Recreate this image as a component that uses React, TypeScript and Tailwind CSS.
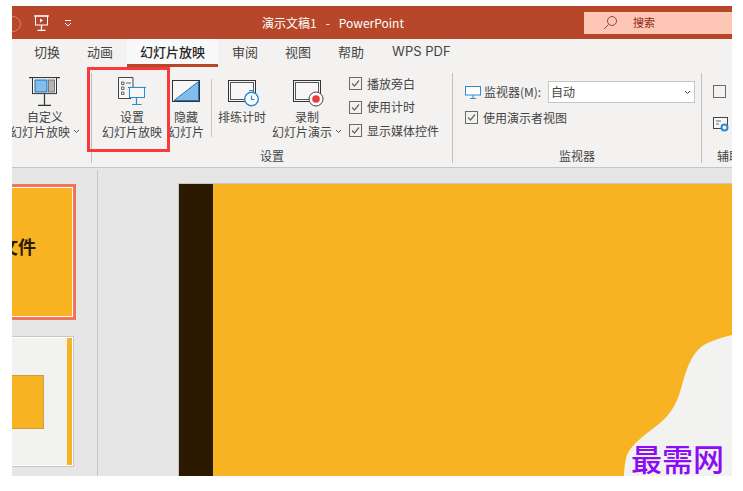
const cjk = "font-['Noto_Sans_CJK_SC','Liberation_Sans',sans-serif]";

function CheckBox({ checked = true }: { checked?: boolean }) {
  return (
    <span className="flex h-[13px] w-[13px] shrink-0 items-center justify-center border border-[#6a6a6a] bg-[#f3f2f1]">
      {checked && (
        <svg width="11" height="11" viewBox="0 0 11 11" fill="none">
          <path d="M2 5.5 L4.5 8 L9 2.5" stroke="#666" strokeWidth="1.2" />
        </svg>
      )}
    </span>
  );
}

function CheckRow({ label, checked }: { label: string; checked?: boolean }) {
  return (
    <div className="flex h-[23.5px] items-center gap-[5px] whitespace-nowrap text-[12px] text-[#444]">
      <CheckBox checked={checked} />
      <span>{label}</span>
    </div>
  );
}

function RibbonButton({
  width,
  iconHeight,
  icon,
  lines,
  chevron,
}: {
  width: string;
  iconHeight: string;
  icon: React.ReactNode;
  lines: string[];
  chevron?: boolean;
}) {
  return (
    <div className={`flex shrink-0 flex-col items-center ${width}`}>
      <div className={`flex items-end justify-center ${iconHeight}`}>{icon}</div>
      <div className="flex flex-col items-center whitespace-nowrap text-[12px] leading-[15px] text-[#444]">
        {lines.map((l, i) => (
          <span key={l} className="flex items-center gap-[3px]">
            {l}
            {chevron && i === lines.length - 1 && <Chevron />}
          </span>
        ))}
      </div>
    </div>
  );
}

function Chevron({ color = "#555" }: { color?: string }) {
  return (
    <svg width="7" height="5" viewBox="0 0 7 5" fill="none">
      <path d="M1 1 L3.5 3.5 L6 1" stroke={color} strokeWidth="1" />
    </svg>
  );
}

function CustomIcon() {
  return (
    <svg width="32" height="29" viewBox="0 0 32 29" fill="none">
      <path d="M0 0.6 H31" stroke="#333" strokeWidth="1.2" />
      <rect x="3.5" y="0.6" width="24" height="16" fill="#f8f8f8" stroke="#333" />
      <rect x="6" y="3" width="12" height="12" fill="#83bdec" stroke="#1f6fb5" />
      <rect x="19.5" y="3" width="6" height="12" fill="#b4b4b4" stroke="#777" />
      <path d="M15.5 17 V28 M9 28.4 H22" stroke="#333" strokeWidth="1.2" />
    </svg>
  );
}

function SetupIcon() {
  return (
    <svg width="29" height="28" viewBox="0 0 29 28" fill="none">
      <path d="M0.5 0.5 H15 V10 M13 21.5 H0.5 V0.5" stroke="#444" fill="#f7f7f7" />
      <path d="M3.5 5 h2.5 v2.5 h-2.5z M3.5 10 h2.5 v2.5 h-2.5z M3.5 15 h2.5 v2.5 h-2.5z M8 6 h5" stroke="#555" strokeWidth="0.9" />
      <path d="M10 10.5 H28" stroke="#2a8dd0" strokeWidth="1.2" />
      <rect x="11.5" y="10.5" width="15" height="10" fill="#f7f7f7" stroke="#2a8dd0" />
      <path d="M18.5 20.5 V27 M14 27.5 H23.5" stroke="#2a8dd0" strokeWidth="1.2" />
    </svg>
  );
}

function HideIcon() {
  return (
    <svg width="28" height="22" viewBox="0 0 28 22" fill="none">
      <rect x="0.5" y="0.5" width="27" height="21" fill="#f7f7f7" stroke="#333" />
      <path d="M3 20 L26 2 V20 Z" fill="#83bdec" />
      <path d="M2 20.5 L26.5 1.5 M26.5 1.5 V20.5 H2" stroke="#1f6fb5" />
    </svg>
  );
}

function RehearseIcon() {
  return (
    <svg className="ml-[4px]" width="32" height="27" viewBox="0 0 32 27" fill="none">
      <rect x="0.5" y="0.5" width="27" height="21" fill="#f7f7f7" stroke="#333" />
      <rect x="2.5" y="2.5" width="23" height="17" fill="none" stroke="#555" />
      <circle cx="23.5" cy="19" r="6.8" fill="#fff" stroke="#2a8dd0" strokeWidth="1.4" />
      <path d="M21 10.5 H26 M23.5 15.5 V19.5 H26.5" stroke="#2a8dd0" strokeWidth="1.2" />
    </svg>
  );
}

function RecordIcon() {
  return (
    <svg className="ml-[2px]" width="31" height="27" viewBox="0 0 31 27" fill="none">
      <rect x="0.5" y="0.5" width="27" height="21" fill="#f7f7f7" stroke="#333" />
      <rect x="2.5" y="2.5" width="23" height="17" fill="none" stroke="#555" />
      <circle cx="23" cy="19" r="7" fill="#fff" stroke="#444" />
      <circle cx="23" cy="19" r="3.8" fill="#ee3a3a" />
    </svg>
  );
}

function Separator() {
  return <div className="mt-[6px] h-[58px] w-px shrink-0 bg-[#c8c8c8]" />;
}

export default function App() {
  return (
    <div className={`h-[491px] w-[743px] overflow-hidden bg-white pb-[15px] pl-[12px] pr-[11px] pt-[6px] ${cjk}`}>
      <div className="relative flex h-full flex-col overflow-hidden">
        {/* Title bar */}
        <div className="relative flex h-[33px] shrink-0 items-center bg-[#b7472a]">
          <span className="absolute -left-[7px] top-[10px] h-[16px] w-[16px] rounded-full border border-[#d8826c]" />
          <svg className="ml-[22px]" width="15" height="16" viewBox="0 0 15 16" fill="none">
            <path d="M0 1 H15" stroke="#fff" strokeWidth="1.2" />
            <rect x="1.5" y="1" width="12" height="9" stroke="#fff" fill="none" />
            <path d="M6 3.5 L9 5.5 L6 7.5 Z" fill="#fff" />
            <path d="M7.5 10 V15 M3.5 15.3 H11.5" stroke="#fff" strokeWidth="1.2" />
          </svg>
          <svg className="ml-[15px]" width="8" height="8" viewBox="0 0 8 8" fill="none">
            <path d="M1 1.5 H7" stroke="#fff" />
            <path d="M1 4 L4 7 L7 4" stroke="#fff" />
          </svg>
          <span className="ml-[190px] whitespace-nowrap text-[12px] text-white">
            演示文稿1<span className="mx-[9px]">-</span>PowerPoint
          </span>
          <div className="ml-auto flex h-[22px] w-[148px] items-center bg-[#fec6b4] pl-[19px] text-[11px] text-[#8c2a12]">
            <svg width="15" height="15" viewBox="0 0 15 15" fill="none">
              <circle cx="9" cy="6" r="4.5" stroke="#8c4a38" />
              <path d="M5.5 9.5 L1 14" stroke="#8c4a38" />
            </svg>
            <span className="ml-[15px]">搜索</span>
          </div>
        </div>

        {/* Tabs */}
        <div className="flex h-[28px] shrink-0 gap-px bg-[#f3f2f1] pb-[2px] pl-[9px] text-[13px] text-[#444]">
          {["切换", "动画"].map((t) => (
            <span key={t} className="flex items-center px-[13px]">{t}</span>
          ))}
          <span className="-mb-[2px] flex items-center border-b-[3px] border-[#b7472a] bg-[#f9f9f9] px-[13px] pt-[1px] font-medium text-[#262626]">
            幻灯片放映
          </span>
          {["审阅", "视图", "帮助"].map((t) => (
            <span key={t} className="flex items-center px-[13px]">{t}</span>
          ))}
          <span className="flex items-center pl-[14px] font-['Inter','Liberation_Sans',sans-serif]">WPS PDF</span>
        </div>

        {/* Ribbon */}
        <div className="flex h-[101px] shrink-0 overflow-hidden border-b border-[#c6c6c6] bg-[#f3f2f1] pt-[6px]">
          <div className="flex h-[90px] w-[80px] shrink-0 border-r border-[#c0c0c0] pl-[3px]">
            <RibbonButton width="w-[60px]" iconHeight="h-[33px] mb-[3px]" icon={<CustomIcon />} lines={["自定义", "幻灯片放映"]} chevron />
          </div>

          <div className="relative flex h-[90px] w-[361px] shrink-0 flex-col border-r border-[#c0c0c0]">
            <div className="flex">
              <RibbonButton width="w-[80px]" iconHeight="h-[28px] mt-[4px] mb-[4px]" icon={<SetupIcon />} lines={["设置", "幻灯片放映"]} />
              <RibbonButton width="w-[28px]" iconHeight="h-[29px] mb-[7px]" icon={<HideIcon />} lines={["隐藏", "幻灯片"]} />
              <div className="ml-[11px]">
                <Separator />
              </div>
              <RibbonButton width="w-[60px]" iconHeight="h-[27px] mt-[7px] mb-[2px]" icon={<RehearseIcon />} lines={["排练计时"]} />
              <RibbonButton width="w-[70px]" iconHeight="h-[27px] mt-[7px] mb-[2px]" icon={<RecordIcon />} lines={["录制", "幻灯片演示"]} chevron />
              <div className="ml-[7px] mt-[-1px] flex flex-col">
                <CheckRow label="播放旁白" />
                <CheckRow label="使用计时" />
                <CheckRow label="显示媒体控件" />
              </div>
            </div>
            <span className="absolute bottom-0 left-0 right-0 text-center text-[12px] leading-[14px] text-[#444]">设置</span>
          </div>

          <div className="relative h-[90px] w-[249px] shrink-0 border-r border-[#c0c0c0] pl-[12px] pt-[8px]">
            <div className="flex h-[22px] items-center whitespace-nowrap text-[12px] text-[#444]">
              <svg width="16" height="13" viewBox="0 0 16 13" fill="none">
                <rect x="0.5" y="0.5" width="15" height="8.5" stroke="#2a8dd0" fill="#fff" />
                <path d="M8 9 V12 M5 12.5 H11" stroke="#2a8dd0" />
              </svg>
              <span className="ml-[3px] w-[64px]">监视器(M):</span>
              <div className="flex h-[22px] w-[147px] items-center justify-between border border-[#c6c6c6] bg-white pl-[2px] pr-[3px]">
                <span>自动</span>
                <Chevron color="#444" />
              </div>
            </div>
            <div className="mt-[3px]">
              <CheckRow label="使用演示者视图" />
            </div>
            <span className="absolute bottom-0 left-0 right-0 text-center text-[12px] leading-[14px] text-[#444]">监视器</span>
          </div>

          <div className="relative h-[90px] flex-1 pl-[11px] pt-[12px]">
            <CheckBox checked={false} />
            <svg className="mt-[19px]" width="16" height="15" viewBox="0 0 16 15" fill="none">
              <rect x="0.5" y="0.5" width="14" height="11" stroke="#444" fill="#f7f7f7" />
              <path d="M3 4 H8 M3 7 H6" stroke="#666" />
              <circle cx="11.5" cy="10.5" r="3" stroke="#2a8dd0" strokeWidth="2" fill="#f3f2f1" />
            </svg>
            <span className="absolute bottom-0 left-[15px] whitespace-nowrap text-[12px] leading-[14px] text-[#444]">辅助</span>
          </div>
        </div>

        {/* Editor area */}
        <div className="flex min-h-0 flex-1 bg-[#e6e6e6]">
          <div className="mt-[2px] w-[86px] shrink-0 overflow-hidden border-r border-[#c4c4c4] pt-[14px]">
            <div className="-ml-[10px] flex h-[136px] w-[74px] border-[3.5px] border-[#f4735a]">
              <div className="flex min-w-0 flex-1 items-center justify-end border border-white bg-[#f8b322] pb-[12px] pr-[36px] text-[18px] font-bold text-[#2b1a00]">
                <span className="shrink-0 whitespace-nowrap">文件</span>
              </div>
            </div>
            <div className="-ml-[10px] mt-[16px] flex h-[131px] w-[72px] border border-[#c6c6c6]">
              <div className="flex flex-1 items-center justify-between border border-white bg-[#f2f2f1]">
                <div className="h-[54px] w-[40px] border-[1.5px] border-[#cfa03a] bg-[#f8b322]" />
                <div className="h-full w-[5px] bg-[#f8b322]" />
              </div>
            </div>
          </div>

          <div className="min-w-0 flex-1 pl-[80px] pt-[15px]">
            <div className="relative flex h-full border-l border-t border-[#c6c6c6]">
              <div className="w-[34px] shrink-0 bg-[#2b1a00]" />
              <div className="flex-1 bg-[#f8b322]" />
              <svg className="absolute bottom-0 right-0" width="108" height="141" viewBox="0 0 108 141">
                <path
                  d="M108 0 C92 4 80 8 74 15 C66 23 62 36 58 50 C54 66 48 78 36 88 C24 98 8 108 3 120 C1 126 0 134 0 141 H108 Z"
                  fill="#f2f2f1"
                />
              </svg>
            </div>
          </div>
        </div>

        {/* Red highlight */}
        <div className="absolute left-[75px] top-[61px] h-[85px] w-[83px] border-[3px] border-[#f73b3b]" />
      </div>

      {/* Watermark */}
      <div className="absolute left-[631px] top-[440px] whitespace-nowrap text-[31px] font-medium leading-[36px] text-[#8b0cf5]">
        最需网
      </div>
    </div>
  );
}
